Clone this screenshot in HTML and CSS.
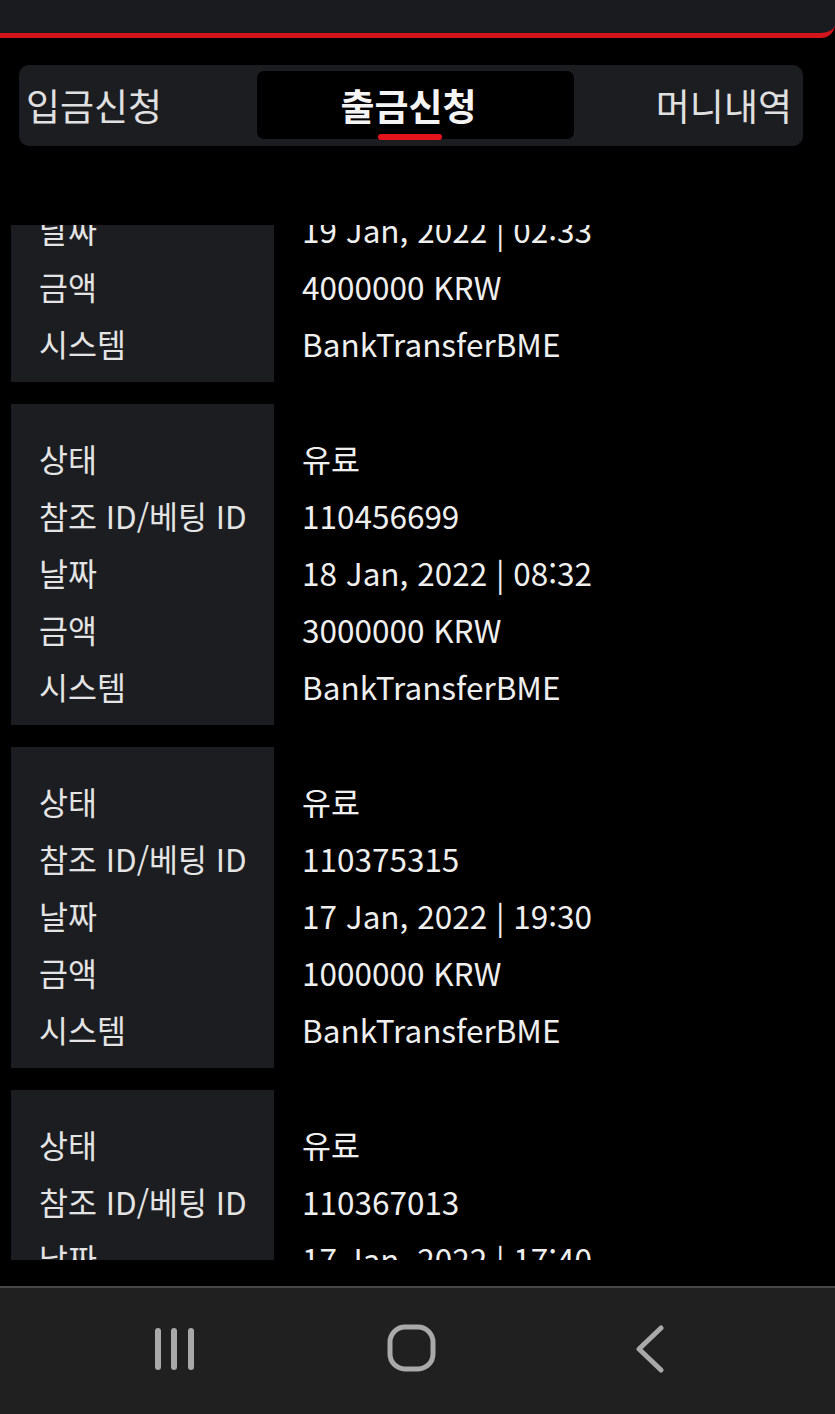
FILE: index.html
```html
<!DOCTYPE html>
<html lang="ko">
<head>
<meta charset="utf-8">
<title>출금신청</title>
<link rel="stylesheet" href="styles.css">
</head>
<body>
<div class="screen">
  <div class="header"></div>
  <div class="tabs">
    <div class="tab tab-left">입금신청</div>
    <div class="tab tab-active">출금신청</div>
    <div class="tab tab-right">머니내역</div>
  </div>
  <div class="viewport">
    <div class="list">
      <div class="card">
        <div class="labels"><div class="row">상태</div><div class="row">참조 ID/베팅 ID</div><div class="row">날짜</div><div class="row">금액</div><div class="row">시스템</div></div>
        <div class="values"><div class="row">유료</div><div class="row">110489012</div><div class="row">19 Jan, 2022 | 02:33</div><div class="row">4000000 KRW</div><div class="row">BankTransferBME</div></div>
      </div>
      <div class="card">
        <div class="labels"><div class="row">상태</div><div class="row">참조 ID/베팅 ID</div><div class="row">날짜</div><div class="row">금액</div><div class="row">시스템</div></div>
        <div class="values"><div class="row">유료</div><div class="row">110456699</div><div class="row">18 Jan, 2022 | 08:32</div><div class="row">3000000 KRW</div><div class="row">BankTransferBME</div></div>
      </div>
      <div class="card">
        <div class="labels"><div class="row">상태</div><div class="row">참조 ID/베팅 ID</div><div class="row">날짜</div><div class="row">금액</div><div class="row">시스템</div></div>
        <div class="values"><div class="row">유료</div><div class="row">110375315</div><div class="row">17 Jan, 2022 | 19:30</div><div class="row">1000000 KRW</div><div class="row">BankTransferBME</div></div>
      </div>
      <div class="card">
        <div class="labels"><div class="row">상태</div><div class="row">참조 ID/베팅 ID</div><div class="row">날짜</div><div class="row">금액</div><div class="row">시스템</div></div>
        <div class="values"><div class="row">유료</div><div class="row">110367013</div><div class="row">17 Jan, 2022 | 17:40</div><div class="row">1000000 KRW</div><div class="row">BankTransferBME</div></div>
      </div>
    </div>
  </div>
  <div class="navbar">
    <div class="nav-slot">
      <svg width="48" height="48" viewBox="0 0 48 48" class="nav-icon"><g stroke="#a9a9a9" stroke-width="6" stroke-linecap="round"><line x1="8" y1="6" x2="8" y2="42"/><line x1="24" y1="6" x2="24" y2="42"/><line x1="41" y1="6" x2="41" y2="42"/></g></svg>
    </div>
    <div class="nav-slot">
      <svg width="52" height="52" viewBox="0 0 52 52" class="nav-icon"><rect x="4" y="4" width="43" height="42" rx="15" ry="15" fill="none" stroke="#a9a9a9" stroke-width="5"/></svg>
    </div>
    <div class="nav-slot">
      <svg width="48" height="48" viewBox="0 0 48 48" class="nav-icon"><polyline points="35,6 13,27 35,48" fill="none" stroke="#a9a9a9" stroke-width="5" stroke-linecap="round" stroke-linejoin="round" transform="translate(0,-3)"/></svg>
    </div>
  </div>
</div>
</body>
</html>
```
FILE: styles.css
```css
html, body {
  margin: 0;
  padding: 0;
  background: #000;
}
body {
  font-family: "Noto Sans CJK KR", "Noto Sans", sans-serif;
  color: #ececec;
}
.screen {
  width: 835px;
  height: 1414px;
  overflow: hidden;
  display: flex;
  flex-direction: column;
  background: #000;
}
.header {
  height: 33px;
  background: #1a1b1f;
  border-bottom: 5px solid #d3141b;
  border-bottom-right-radius: 14px;
  flex: none;
}
.tabs {
  margin: 27px 0 0 19px;
  width: 784px;
  height: 81px;
  box-sizing: border-box;
  padding: 6px 0 7px;
  background: #1c1d21;
  border-radius: 10px;
  display: flex;
  flex: none;
}
.tab {
  font-size: 37px;
  line-height: 68px;
  height: 68px;
  color: #e0e0e0;
  white-space: nowrap;
}
.tab-left {
  width: 238px;
  padding-left: 7px;
  box-sizing: border-box;
}
.tab-active {
  width: 317px;
  position: relative;
  background: #000;
  border-radius: 7px;
  text-align: center;
  font-weight: 700;
  color: #f4f4f4;
  padding-right: 14px;
  box-sizing: border-box;
}
.tab-active::after {
  content: "";
  position: absolute;
  left: 121px;
  bottom: -1px;
  width: 64px;
  height: 6px;
  border-radius: 3px;
  background: #e5131b;
}
.tab-right {
  flex: 1;
  text-align: right;
  padding-right: 11px;
}
.viewport {
  margin-top: 79px;
  height: 1035px;
  overflow: hidden;
  flex: none;
}
.list {
  margin-top: -164px;
  display: flex;
  flex-direction: column;
  gap: 22px;
}
.card {
  display: flex;
  margin-left: 11px;
}
.labels {
  width: 263px;
  background: #1c1d21;
  padding: 26px 0 10px 28px;
  box-sizing: border-box;
}
.values {
  padding: 26px 0 10px 28px;
}
.row {
  height: 57px;
  line-height: 57px;
  font-size: 31.5px;
  white-space: nowrap;
}
.labels .row {
  color: #e4e4e4;
}
.values .row {
  color: #efefef;
}
.navbar {
  margin-top: 26px;
  flex: 1;
  border-top: 2px solid #474747;
  background: #202020;
  display: flex;
  align-items: center;
  padding-left: 55px;
  padding-bottom: 4px;
}
.nav-slot {
  width: 238px;
  display: flex;
  justify-content: center;
  align-items: center;
}
.nav-icon {
  display: block;
}
```
